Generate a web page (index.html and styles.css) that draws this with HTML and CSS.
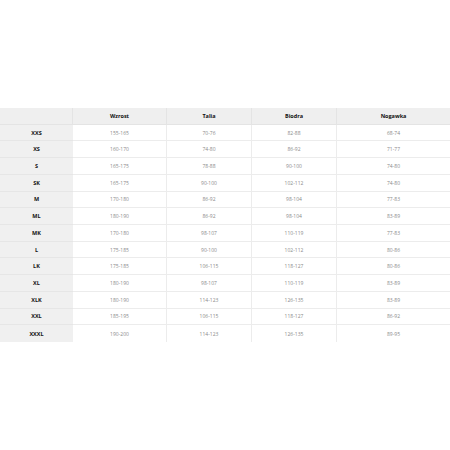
FILE: index.html
```html
<!DOCTYPE html>
<html>
<head>
<meta charset="utf-8">
<link rel="stylesheet" href="styles.css">
</head>
<body>
<div class="table">
  <div class="cell head"></div>
  <div class="cell head">Wzrost</div>
  <div class="cell head">Talia</div>
  <div class="cell head">Biodra</div>
  <div class="cell head last">Nogawka</div>

  <div class="cell size">XXS</div><div class="cell">155-165</div><div class="cell">70-76</div><div class="cell">82-88</div><div class="cell last">68-74</div>
  <div class="cell size">XS</div><div class="cell">160-170</div><div class="cell">74-80</div><div class="cell">86-92</div><div class="cell last">71-77</div>
  <div class="cell size">S</div><div class="cell">165-175</div><div class="cell">78-88</div><div class="cell">90-100</div><div class="cell last">74-80</div>
  <div class="cell size">SK</div><div class="cell">165-175</div><div class="cell">90-100</div><div class="cell">102-112</div><div class="cell last">74-80</div>
  <div class="cell size">M</div><div class="cell">170-180</div><div class="cell">86-92</div><div class="cell">98-104</div><div class="cell last">77-83</div>
  <div class="cell size">ML</div><div class="cell">180-190</div><div class="cell">86-92</div><div class="cell">98-104</div><div class="cell last">83-89</div>
  <div class="cell size">MK</div><div class="cell">170-180</div><div class="cell">98-107</div><div class="cell">110-119</div><div class="cell last">77-83</div>
  <div class="cell size">L</div><div class="cell">175-185</div><div class="cell">90-100</div><div class="cell">102-112</div><div class="cell last">80-86</div>
  <div class="cell size">LK</div><div class="cell">175-185</div><div class="cell">106-115</div><div class="cell">118-127</div><div class="cell last">80-86</div>
  <div class="cell size">XL</div><div class="cell">180-190</div><div class="cell">98-107</div><div class="cell">110-119</div><div class="cell last">83-89</div>
  <div class="cell size">XLK</div><div class="cell">180-190</div><div class="cell">114-123</div><div class="cell">126-135</div><div class="cell last">83-89</div>
  <div class="cell size">XXL</div><div class="cell">185-195</div><div class="cell">106-115</div><div class="cell">118-127</div><div class="cell last">86-92</div>
  <div class="cell size bottom">XXXL</div><div class="cell bottom">190-200</div><div class="cell bottom">114-123</div><div class="cell bottom">126-135</div><div class="cell last bottom">89-95</div>
</div>
</body>
</html>
```
FILE: styles.css
```css
html, body {
  margin: 0;
  padding: 0;
  background: #ffffff;
}
body {
  font-family: "Open Sans", "DejaVu Sans", sans-serif;
}
.table {
  margin-top: 108px;
  width: 450px;
  height: 234px;
  display: grid;
  grid-template-columns: 73px 94px 85px 85px 1fr;
  grid-template-rows: repeat(14, 1fr);
}
.cell {
  display: flex;
  align-items: center;
  justify-content: center;
  font-size: 5px;
  color: #8a8a8a;
  border-right: 1px solid #ececec;
  border-bottom: 1px solid #ececec;
  background: #ffffff;
}
.cell.last {
  border-right: none;
}
.cell.bottom {
  border-bottom: none;
}
.cell.head {
  background: #efefef;
  color: #111111;
  font-weight: 700;
  font-size: 5.5px;
  border-bottom-color: #e4e4e4;
  border-right-color: #e4e4e4;
}
.cell.size {
  background: #f0f0f0;
  color: #111111;
  font-weight: 700;
  font-size: 5.5px;
  border-right: none;
  border-bottom-color: #e6e6e6;
}
```
